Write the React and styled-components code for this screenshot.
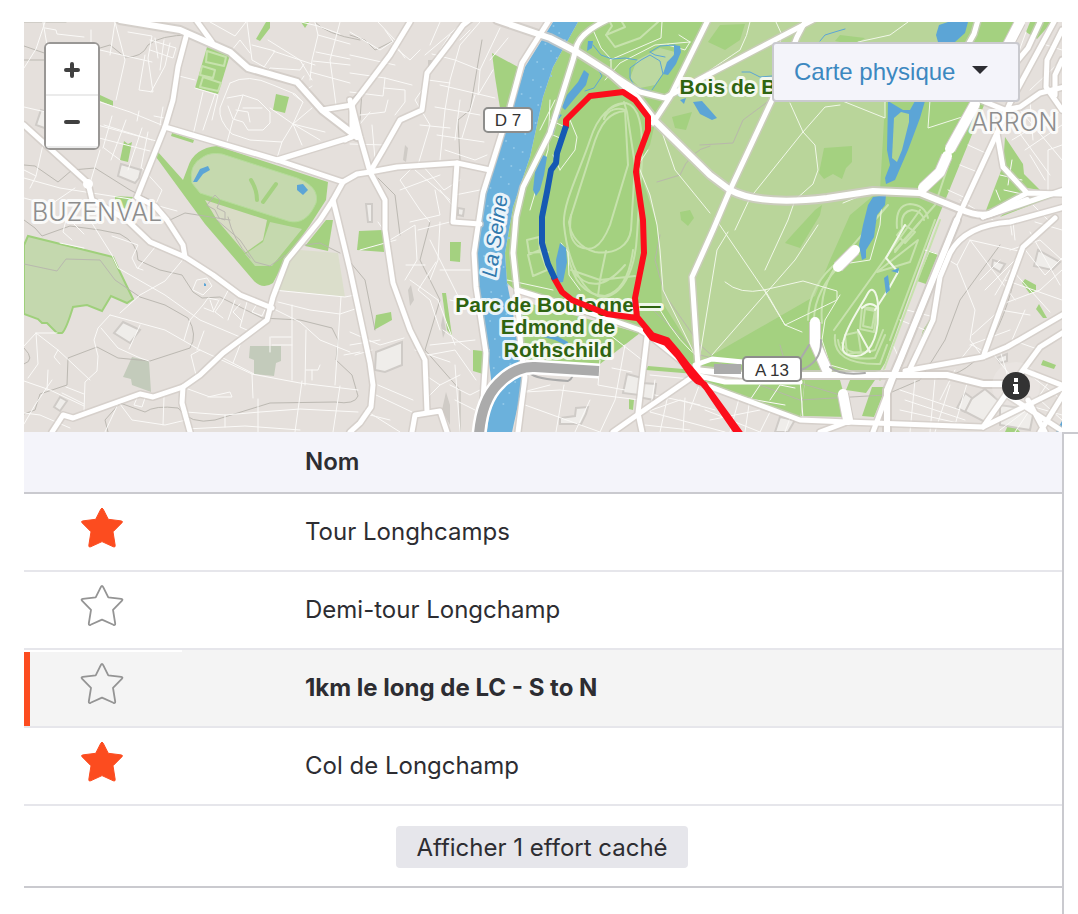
import React, { useState } from "react";
import styled, { createGlobalStyle } from "styled-components";

const GlobalStyle = createGlobalStyle`
    * {
        box-sizing: border-box;
    }

    body {
        margin: 0;
        background: #fff;
        color: #2d2d32;
        font-family: Inter, "Liberation Sans", sans-serif;
    }
`;

const Page = styled.div`
    display: grid;
    grid-template-columns: minmax(0, 1fr) 16px;
    grid-template-rows: 410px 1fr;
    grid-template-areas:
        "map ."
        "results aside";
    min-height: 100vh;
    padding: 22px 0 0 24px;
`;

const MapPanel = styled.section`
    grid-area: map;
    position: relative;
    overflow: hidden;
    background: #e5e0dc;
`;

const MapDrawing = styled.svg`
    display: block;
    width: 100%;
    height: 100%;
`;

const ZoomControl = styled.div`
    position: absolute;
    top: 20px;
    left: 20px;
    width: 56px;
    overflow: hidden;
    border: 2px solid #999795;
    border-radius: 6px;
    background: #fff;
`;

const ZoomButton = styled.button`
    display: flex;
    align-items: center;
    justify-content: center;
    width: 100%;
    height: 52px;
    padding: 2px 0 0;
    border: 0;
    border-bottom: 2px solid #ebebeb;
    background: #fff;
    cursor: pointer;
`;

const MapType = styled.div`
    position: absolute;
    top: 20px;
    right: 42px;
    display: flex;
    align-items: center;
`;

const MapSelect = styled.select`
    width: 248px;
    height: 60px;
    padding: 0 56px 2px 20px;
    appearance: none;
    border: 2px solid #cacacf;
    border-radius: 4px;
    background: #f4f4fa;
    color: #3c88c0;
    font-family: "Liberation Sans", Arial, sans-serif;
    font-size: 24px;
    cursor: pointer;
`;

const Caret = styled.svg`
    position: absolute;
    top: 24px;
    right: 32px;
    width: 16px;
    height: 8px;
    pointer-events: none;
`;

const InfoButton = styled.button`
    position: absolute;
    right: 32px;
    bottom: 32px;
    width: 28px;
    height: 28px;
    padding: 0;
    border: 0;
    border-radius: 50%;
    background: #333;
    box-shadow: 0 0 0 10px rgba(255, 255, 255, 0.15);
    cursor: pointer;
`;

const Results = styled.section`
    grid-area: results;
    min-width: 0;
`;

const Aside = styled.aside`
    grid-area: aside;
    border-top: 2px solid #cacacf;
    border-left: 2px solid #cacacf;
`;

const SegmentTable = styled.table`
    width: 100%;
    table-layout: fixed;
    border-collapse: separate;
    border-spacing: 0;
    font-size: 24px;
    line-height: 32px;
`;

const HeadCell = styled.th`
    width: ${(props) => (props.$star ? "158px" : "auto")};
    height: 62px;
    padding: 0 20px 0 ${(props) => (props.$star ? "20px" : "123px")};
    border-bottom: 2px solid #cacacf;
    background: #f4f4fa;
    font-weight: 600;
    text-align: left;
`;

const StarCell = styled.td`
    height: 78px;
    padding: 0 2px 0 0;
    border-bottom: 2px solid #e6e6eb;
    background: ${(props) => (props.$active ? "#f4f4f4" : "#fff")};
    box-shadow: ${(props) => (props.$active ? "inset 0 2px #fff, inset 6px 0 #fc4c1f" : "none")};
    text-align: center;
`;

const NameCell = styled.td`
    height: 78px;
    padding: 0 20px 0 123px;
    border-bottom: 2px solid #e6e6eb;
    background: ${(props) => (props.$active ? "#f4f4f4" : "#fff")};
    font-weight: ${(props) => (props.$active ? 700 : 400)};
`;

const StarButton = styled.button`
    display: block;
    width: 44px;
    height: 44px;
    margin: 0 auto 8px;
    padding: 0;
    border: 0;
    background: none;
    cursor: pointer;
`;

const FooterCell = styled.td`
    height: 82px;
    padding: 2px 2px 0 0;
    border-bottom: 2px solid #cacacf;
    text-align: center;
`;

const HiddenButton = styled.button`
    height: 42px;
    padding: 0 20px;
    border: 0;
    border-radius: 4px;
    background: #e6e6eb;
    color: #2d2d32;
    font-family: inherit;
    font-size: 24px;
    cursor: pointer;
`;

const Parks = styled.g`
    fill: #a4d180;
`;

const Water = styled.g`
    fill: #5ca5d6;
`;

const Lines = styled.g`
    fill: none;
    stroke: ${(props) => props.$color};
    stroke-width: ${(props) => props.$width}px;
    stroke-linejoin: round;
    stroke-linecap: ${(props) => props.$cap || "round"};
    opacity: ${(props) => props.$opacity || 1};
`;

const Label = styled.text`
    paint-order: stroke;
    stroke: #fff;
    stroke-opacity: 0.85;
    stroke-width: 6px;
    stroke-linejoin: round;
`;

const PlaceLabel = styled(Label)`
    fill: #8d8d8d;
    font: 300 25px Inter, sans-serif;
`;

const ParkLabel = styled(Label)`
    fill: #2f6411;
    font: bold 21px "Liberation Sans", Arial, sans-serif;
    text-anchor: middle;
`;

const RiverLabel = styled(Label)`
    fill: #3179ae;
    font: italic 21px "Liberation Sans", Arial, sans-serif;
`;

const ShieldLabel = styled.text`
    fill: #333;
    font: 17px "Liberation Sans", Arial, sans-serif;
    text-anchor: middle;
`;

const parks = [
    "M158 152L183 180L188 167Q194 148 217 146L328 182L326 200L310 225L284 262L273 283Q263 290 254 281L205 224L156 157Z",
    "M333 220L328 251L305 246L326 220Z",
    "M207 47L230 55L218 94L195 88Z",
    "M276 94L289 97L285 113L273 110Z",
    "M266 22H270V28L260 41L256 39Z",
    "M301 22H309L305 28Z",
    "M100 95L113 101V106L100 101Z",
    "M124 141L128 144L132 142L128 162L120 160Z",
    "M115 196L133 197L126 209L115 205Z",
    "M172 133L194 140L193 143L171 136Z",
    "M359 231L383 230L384 252L357 250Z",
    "M450 242H461L460 262L450 261Z",
    "M473 350L483 351V374L473 371Z",
    "M376 315L391 312L392 320L374 330Z",
    "M442 293H446L452 336L447 330Z",
    "M629 399L634 400L633 410L629 409Z",
    "M492 53L518 67L508 108H500L495 77Z",
    "M578 22H1018L933 230L885 363L878 374H700L645 335L517 292L507 283L505 253L513 207L530 157L543 97L553 67Z",
    "M517 300L640 333L600 364L524 362Z",
    "M1030 22H1052L1037 39L1026 32Z",
    "M1005 137L1023 164L1024 174L1040 190L1027 188L1003 166Z",
    "M1002 168L1025 192L985 213Z",
    "M1000 217L1052 197L1020 198Z",
    "M700 380L805 379L800 420Z",
    "M805 380H840L850 417L801 416Z",
    "M850 380H875L866 393L846 390Z",
    "M872 387H886L874 417L862 416Z",
    "M930 251L938 254L926 284L917 281Z",
    "M923 330L931 318L926 334L921 338Z",
    "M1025 279L1036 285V291L1030 294L1022 283Z",
    "M1039 304L1047 318L1043 318L1036 309Z",
    "M1043 360L1056 365L1054 369L1041 365Z",
    "M1010 421L1020 432H1005Z",
    "M648 366L695 370V374L646 370Z",
];

const minorRoads = [
    // north west
    "M43 22L47 45L52 78L58 140", "M24 68L36 49L45 22", "M45 28L56 30L57 34L84 37", "M91 42V30M110 55L115 22L125 60L116 100",
    "M100 50L152 62", "M128 32L152 36L148 58L153 92L139 90L145 55", "M150 40L176 48L173 58L150 50", "M155 38L158 58M164 40L160 70M170 43L165 66L151 92",
    "M24 107L50 113L90 123L160 142", "M100 102L130 112L164 126", "M139 111L137 121M163 107L160 125M154 116L164 118", "M112 116L103 148M126 120L111 160M142 128L128 170M148 132L141 168",
    "M104 125L152 140M99 138L150 151M104 148L120 160", "M50 113L36 176M24 170L36 176L30 188M100 150L88 190", "M24 178L60 188L137 200L177 211", "M24 198L50 205L75 188",
    "M142 168L162 190L155 206", "M179 76L195 80M203 92L193 135M215 94L203 130M195 88L218 95L212 120",
    "M230 83Q248 73 273 85L295 94L303 102L293 124L282 142L250 140L232 134Q218 120 220 108L230 83",
    "M227 98L243 95L258 100L270 112V123L263 130H248L243 122L233 119L228 106", "M243 95L238 110L234 119M236 110L248 112L250 122M243 108H262", "M303 102L293 94M293 124L320 140M293 124L312 108M293 124L325 132M293 124L270 108M293 124L302 145M282 142L277 158M227 142L233 120",
    "M232 50L240 40L250 53M210 22L235 36L246 22M247 22L252 60L273 72M268 40L300 60L312 80M252 45L275 51L262 70M273 51L315 65", "M315 22L318 35L312 60L310 80M318 35L350 44M316 52L350 59M313 61L350 65M310 72L350 83",
    "M265 76L270 68L300 70L304 64M300 82L304 76M306 90L312 86M336 105L330 60L340 22", "M301 22L318 26L340 34",
    // south west
    "M66 220L63 232L72 240M72 222L84 234M60 243L84 248M90 220L112 255L118 268L165 295L200 320L240 337", "M112 236L138 245L132 258L137 268L143 270M156 246L138 268", "M185 257L165 281L140 295L120 313", "M57 333L36 333L24 346",
    "M24 381L50 390L84 406M36 333L58 350L90 380", "M36 333L38 364L28 378M58 350L54 357L60 364M48 370L47 390", "M110 315L98 328L94 340L98 356L97 371L85 382L84 411M110 315L165 330L200 350L252 374L300 383L358 390",
    "M101 328L118 348L140 358L149 361M129 349L140 325", "M197 280L207 278L212 286L203 295L193 290Z", "M200 350L191 355L196 375M204 331L197 350M184 340L190 320L203 305L208 298L218 300",
    "M230 287L222 302L215 312L223 318M219 300L214 310M235 300L228 320M210 300L214 312L204 308M247 302L240 327L247 330M240 304L233 312L242 321M258 302L252 312L262 316L267 305", "M270 337V352M271 337H291M292 305V380M272 345H292M306 330L305 385M320 365L318 370H306M312 370V380",
    "M240 345L233 363M223 358L254 374M252 374L253 398M258 399V432M302 381L295 432M340 386L333 432M188 389L210 397H232L230 392L208 397M186 412L225 415L260 412L300 409L358 412M225 415V427M186 429L245 426L300 430", "M120 404L132 420L165 425L186 420M164 397L163 425M118 404L105 432M137 398L134 405L142 407L145 398",
    "M66 387L84 394M62 393L84 404M24 413L40 415L70 428M24 424L35 405L52 380", "M273 290L345 297L355 295M278 302L310 310L340 314L358 308M341 297L335 385M272 308L300 322L320 340L350 352", "M344 355L360 352",
    // centre
    "M350 32L380 50L395 40L404 30M350 55L395 65M385 30L405 58M378 22L395 40", "M350 73L385 78L412 85M385 78L383 96L350 92M384 88L405 90V102L395 115", "M360 115L385 112L388 100M372 125L376 170M350 144L385 145M360 124L370 112",
    "M480 22L460 45L450 80L445 110L440 160", "M470 30L460 40M500 28L480 70L478 95L493 70M508 38L490 60", "M432 54L455 60L480 70M428 80L450 83M422 90L415 100L430 125L418 165M440 85L495 98",
    "M420 125L450 128M435 107L480 115M437 135L484 142M445 150L475 160L487 155", "M475 95L462 138M460 100L455 140", "M412 168L400 180L420 210L430 222M415 170L450 200M422 165L444 190L460 180M400 190L440 175", "M435 190L440 215L410 222M455 220V195L480 190",
    "M392 45L410 60L420 50M440 22L430 45M450 35L440 50M458 27L425 55M440 190L452 205",
    "M385 232L378 222M390 240L415 225L417 260L405 280M406 265H425M418 230L450 222M430 240L460 300M440 222L438 260L430 280", "M410 280L438 300M436 262L418 290L430 300L440 330",
    "M440 270L470 270M438 300L455 345M450 300L472 305M443 330L470 350M430 345L475 340", "M428 355L455 350L476 380M415 350L450 362M425 375L440 385L460 375M440 385L425 400M450 385L470 395L480 390M455 400L475 410",
    "M455 365L460 432M378 385L413 400M376 395L412 412M365 410L400 432M396 240L360 250", "M350 332L380 345L404 338M355 355L372 350M350 345L380 340M390 420L370 415",
    // boulogne
    "M530 370L525 392L560 390L640 400M564 385L556 432M523 392L550 385", "M600 360L598 385L625 390M612 368L632 372M625 345L615 400L600 432M648 345L642 360L610 335M650 375L700 380",
    "M655 380L650 412L725 432M668 395L660 432M685 398L683 432M643 413L680 400L715 410M700 383L690 410M655 395L700 405M645 425L690 430",
    "M525 405L600 432M590 400L575 432M740 395L730 432M750 398L745 432M705 410L760 432M770 412L760 432M790 418L785 432M710 420L760 410",
    "M727 395L785 405M750 400L760 385M770 400L780 385L795 388M800 380L803 418",
    // east side
    "M1040 43L1062 50M1026 32L1005 90M1062 60L1030 90M1020 110L1062 160M1010 120L1050 175M1025 150L1062 125M1012 140L1062 110M1033 140L1030 100M1045 180L1030 155M1048 190V150L1062 145",
    "M968 145L990 155M960 165L980 173M948 190L970 200M1000 175L1022 180M1004 190L1022 194M996 190L1000 200M1012 160L1008 185", "M940 400L955 370M925 250L940 255L957 265L970 240L1023 252M957 265L975 310L970 340L985 360",
    "M970 240L1015 300M980 280L1000 260M995 295L1010 270M985 290L1020 255M1000 305L1040 290L1062 270M1012 270L1050 312M1025 310L1012 340L1040 350M1010 250L1040 240L1062 260M1035 222L1062 230",
    "M1005 280L1062 300M972 335L1000 310L1030 315M970 345L1010 330M1023 247L1045 275L1062 258M1013 222L1015 240M1030 232L1060 285", "M900 320L925 330L915 350M893 345L900 360M907 310L930 316",
    "M900 390L960 410M915 380L910 432M935 378L930 432M950 385L935 432M905 400L965 420M968 380L955 425M900 410L980 428M990 350L1010 375M960 360L972 345L990 355M1000 350L1010 384",
    "M1030 375L1062 400M1010 400L1062 415M1000 430L1040 400L1062 420M1050 380L1015 432", "M993 220L960 200M1010 220L1012 235M1033 205L1050 222",
];

const parkPaths = [
    "M594 32L601 48L611 59V71M662 22L661 38L610 60M605 80L620 63L655 45L690 42M690 42L679 35M700 77Q725 60 740 50Q748 35 750 22M776 57L782 35L776 22",
    "M858 42L890 35L908 22M790 103L803 132L815 145L818 170L813 184L795 200L788 220L765 270M803 132L825 107L840 105M803 132L750 198L735 230M840 100L885 118V100",
    "M715 218L764 290L785 325M764 290Q740 295 725 282M764 290L803 281L837 291V300L785 325L765 290M728 232L717 250L700 355M818 225L795 260L712 355",
    "M930 100L928 128L962 117M843 203L870 192M560 170L575 150L577 137L570 120M663 135L675 170L710 213M648 150L638 165L650 195L657 225L660 250L663 290L695 355M530 210L548 150L550 100",
    "M507 280L530 285L553 290M553 155L560 170M550 120L565 127M548 133L560 138M561 243L568 252L569 275L580 290M800 55L803 77M668 45L685 50L690 42M700 358Q680 345 660 310",
    "M882 200L880 225L870 260L850 263L845 255M840 295L825 320L822 340L830 365L865 375L885 370M785 325L802 332M555 100L540 130",
];

const raceTracks = [
    "M604 119C606 108 616 103 626 103C639 106 643 125 642 160L637 235C635 275 620 296 603 297C585 296 568 265 564 225C562 205 580 170 590 140C598 115 610 105 626 103",
    "M604 119C608 109 618 107 625 110L628 165L610 225C600 250 590 252 578 246C570 240 569 230 571 215",
    "M624 102L627 112L635 165L631 230C629 245 616 255 595 252C580 248 570 235 569 222L592 150C600 122 610 112 625 111",
    "M567 248Q573 295 605 296Q628 290 633 250M572 270Q595 300 625 265M571 270L600 280L606 251M598 296L600 280L635 276",
    "M527 240L539 237L540 252L529 253ZM528 255L540 250L547 270L533 276ZM540 252L548 252",
    "M606 35L625 27L622 22M606 35L615 47L640 38L658 22M606 35L612 26L610 22",
    "M940 220L880 380M935 220L890 340M895 252L920 222M910 262L877 272L918 240Z",
    "M835 335Q832 365 880 364L887 345M838 340Q840 362 875 358L885 335M842 343Q848 358 875 350L883 330M834 330L920 210",
    "M845 335L858 332L861 352L847 354ZM862 307L877 309L874 332L860 329ZM865 309L875 311L872 328L863 326ZM905 225L915 232L905 243L897 235Z",
    "M897 228Q895 205 910 204Q925 205 928 218M902 228Q900 212 912 210Q922 211 924 220M895 250L935 205L950 160M822 323Q818 280 850 250",
    "M808 320Q808 285 840 260L888 205M814 320Q814 290 845 260",
];

const outlinedTracks = [
    "M843 350C840 335 862 305 868 293C873 284 879 294 878 315C878 340 868 357 855 356Q845 356 843 350Z",
    "M858 330L870 352M862 308Q870 300 878 308M886 258L898 272L888 290L875 310M886 258L905 225",
];

const contours = [
    "M24 46L50 55M24 60L60 60L110 45L125 57Q142 58 148 45Q160 35 190 35M24 22H66M315 22Q325 34 360 40",
    "M24 165L35 166L58 182L72 170L95 168L130 190L150 200L170 220L185 213L230 220", "M24 220L35 228L42 236L70 226L100 230L120 234Q138 243 138 260L160 270L182 275L193 292L202 298L220 297L262 318L300 320L332 328L338 340L336 360L352 375L358 396Q355 405 335 402L270 403L215 420Q190 425 178 408Q155 405 145 412L120 403L105 420L108 432",
    "M24 264L57 271L66 259L100 260L115 280L140 297L165 305L188 318Q198 335 190 348L150 361L118 358L97 347L68 358L67 385L40 394L35 410L24 414M24 348Q36 360 24 364",
    "M350 35L365 40L375 50L395 40M482 40L470 110L458 120L460 160M350 100L362 90L360 120M378 178L395 195L400 235M350 262L365 280L375 330M430 222L420 260L440 300L425 350L460 390L460 432",
    "M700 145L733 143L743 120L770 100L790 70M660 235L655 260L665 295L700 345M710 146Q690 150 680 175L657 182M648 305L700 355L720 360",
    "M1000 245L960 300L945 340L920 380L885 395L800 400L760 385M700 345L740 380M938 378Q1000 372 1020 250M780 345L790 380L840 395",
    "M305 245L320 243L340 253M207 205L215 195L220 200L217 208L225 212V220L219 218L215 210ZM217 220L240 240L255 262L270 266L285 255M228 217Q233 240 250 258",
];

const buildings = [
    "M41 110L60 115L50 130L36 125Z", "M121 164L141 170L139 178L135 183L118 176Z", "M123 322L140 330L130 343L114 333Z", "M60 397L67 401L60 411L54 407Z", "M376 352L402 342V365L385 372L375 370Z", "M366 204L372 204V222H368Z", "M458 208L464 209L463 216L458 215Z",
    "M627 374L642 378L639 395L623 393ZM642 383L656 384L654 400L638 397Z", "M560 418L575 416L576 408L588 407L586 414L581 424L560 424Z", "M1038 250L1060 262L1052 270L1034 266Z", "M993 260L1005 264L1000 272L992 267Z", "M997 358L1007 354V361L1000 363Z", "M985 389L1000 402L985 422L960 409L970 400Z", "M965 393L972 398L965 412L957 408Z", "M780 417L795 420L788 432H775Z",
    "M1000 405L1034 410L1030 430L1000 425Z",
];

const roads = [
    "M187 33L178 67L173 100L165 127L137 197", "M165 127L277 160L343 182L357 174L370 172L397 167L457 163L490 170", "M24 125L88 183L92 200L127 220L150 242L185 257L213 275L240 295L272 308",
    "M137 197L155 206L167 220L183 245L185 257", "M343 182L333 200L320 220L287 260L273 297L267 320L223 353L200 375L183 387L153 397L140 394L73 418L63 415L52 432", "M183 387L182 403L190 432",
    "M333 200L338 220L350 270L370 363L373 385L371 407L360 423L350 432", "M370 172L385 200V230L393 283L410 330L425 360L427 412", "M412 432L415 415L440 411L447 432", "M370 172L383 150L400 120L422 110L427 73L450 43L463 25L472 18",
    "M322 110L352 105V137L277 160", "M352 105L362 92L390 55L410 22", "M352 105L360 137L370 172", "M350 100L357 133L345 140", "M457 163L453 222L480 224", "M548 22L522 63L510 107L483 193L474 253L476 287L486 353L483 400L482 432", "M196 20L212 42",
    "M607 20Q582 32 577 45L573 60L550 133L523 187L516 217L513 253L517 290L521 350L525 377L518 432", "M517 290L600 316L640 330L650 336L690 368", "M708 20L670 97L653 123", "M610 73L640 92L665 98L700 79L813 20", "M806 20L797 37L772 100L730 190L713 230L692 277L698 367",
    "M647 337L638 413L642 432", "M698 373L640 413L613 432", "M700 383L800 420L847 422L983 427L1062 388", "M978 97L995 68", "M1055 20L1010 103L997 133L960 213L957 220L900 360L873 432",
    "M1064 207L1010 222Q965 225 950 253L940 277L933 320L908 373", "M997 133L1003 167L1027 193L1064 194M1027 193L983 217", "M980 100L1005 110L1020 107L1040 93L1064 87", "M1062 30L1047 60L1046 87L1062 110M1040 22L1028 48L985 100M1062 60L1055 75V95",
    "M1055 218L1023 247L983 357M905 371L983 357L1007 347L1064 314M1064 332L1040 347L1023 370L1064 386M983 427L1023 370M1028 400L1045 432M1064 393L1040 432M1007 395L1064 432", "M820 432L847 422",
    "M978 20L974 34L965 50M983 217L1064 190",
];

const mainRoads = [
    "M120 20L180 30L230 52L248 68L297 82L322 110L357 137", "M497 20L550 38L577 52L610 73L637 97L657 123L710 175L730 190Q760 206 827 198L873 191L920 193L960 209Q978 217 990 214L1027 200",
    "M695 370L743 375L810 375H877L947 375L983 384L1015 384", "M957 220L900 360L887 390V432",
];

const wideRoads = [
    "M1020 22L1008 45", "M975 104L950 149", "M947 156L940 172L923 188", "M815 322V343L827 370", "M843 394L848 420", "M855 250L838 267",
];

const riverPath =
    "M553 22L525 67L513 107L497 160L483 200L477 253L478 280L488 353L492 387L487 432H512L522 387L520 360L513 313L507 283L505 253L513 207L530 157L543 97L553 67L578 22Z";

const ponds = [
    "M584 70L589 74L586 85L575 98L565 110L562 107L567 95L578 82Z", "M543 155L547 157L544 175L540 190L536 196L533 190L535 172Z", "M588 41L593 41L592 48L587 51Z", "M560 243L566 248L567 262L563 282L557 283L556 260Z", "M543 337L555 335L568 342L567 346L555 340Z",
    "M674 45L680 46L681 52L676 64L668 75L663 74L667 62L674 55Z", "M693 102L702 101L710 110L717 118L712 120L700 114Z", "M680 100L686 98L684 104Z", "M559 114L562 115L558 120L556 118ZM553 128L555 128L553 136Z",
    "M939 25L948 22H968L965 33L955 42H938L936 35Z", "M888 101L903 110H910L915 101H925L920 118L908 150L895 180L886 184L885 178L890 165L887 150Z", "M868 205L873 197L886 195L885 205L877 215L874 237L866 250V258L862 260L859 245L863 225Z", "M884 278L888 275L890 290L886 294ZM891 271L899 268L898 273Z",
    "M193 182L200 169L208 166L210 170L203 174L197 182Z", "M297 185L303 184L308 190L303 195L297 190Z", "M204 283L206 284L206 286H204Z", "M1062 421V432H1056Z",
];

const dots = Array.from({ length: 64 }, (_, i) => ({ y: 26 + i * 6 + (i % 3), t: (i * 37) % 27 }));

// left edge of the river at a given height
const bank = (y) => {
    if (y < 67) return 553 - (y - 22) * 0.62;
    if (y < 200) return 525 - (y - 67) * 0.31;
    if (y < 280) return 482 - (y - 200) * 0.05;
    return 479 + (y - 280) * 0.1;
};

const MapBackground = () => (
    <MapDrawing viewBox="24 22 1038 410" preserveAspectRatio="xMidYMid slice" role="img" aria-label="Carte du parcours">
        <rect x="-500" y="0" width="2200" height="460" fill="#e5e0dc" />
        <path d="M288 258L300 250L338 253L345 297L278 290Z" fill="#dbdecb" />
        <path d="M132 357L149 361L151 392L132 385L131 379L123 377ZM250 346H281V361L276 363L274 376L254 374V360L249 358Z" fill="#c3cbbb" />
        <path d="M24 245L28 236L113 257L118 268L133 299L127 303L111 296L102 311L87 305L73 307Q66 330 62 333H57L47 323H42L38 319L24 314Z" fill="#c4d8ae" stroke="#9fd07b" strokeWidth="2" />
        <Parks>
            {parks.map((d) => (
                <path key={d} d={d} />
            ))}
        </Parks>
        <path d="M192 183Q188 165 203 157Q210 152 222 154L297 178Q320 187 316 203Q306 226 288 221L200 193Z" fill="#c5d9ae" stroke="#b5dc9a" strokeWidth="1" />
        <path d="M205 200L267 220L263 240L245 253L217 220Z" fill="#d9dcc6" />
        <path d="M270 222L302 229L272 266H255L245 254L263 242Z" fill="#c5d9ae" />
        <path d="M655 123L672 90L708 22H960L930 62L885 103L880 190L850 215L830 260L815 296L700 362L662 302L657 225L638 165L650 145Z" fill="#b9d59a" />
        <path d="M637 60L660 48L675 52L665 70L655 85L640 88L630 78Z" fill="#bcd8a0" />
        <g fill="#a4d180">
            <path d="M824 148L852 146V162L846 168L842 179L833 174L824 179L819 173Z" />
            <path d="M720 25L745 24L740 40L725 50L708 42Z" />
            <path d="M680 212L690 210L694 218L688 226L681 220Z" />
            <path d="M792 235L815 210L822 205L820 215L800 248L785 243Z" />
            <path d="M840 35L865 38L855 45L835 41Z" />
            <path d="M672 117L692 112L686 130L675 128Z" />
        </g>
        <Lines $color="#b8b5ae" $width={1} $opacity={0.9}>
            {contours.map((d) => (
                <path key={d} d={d} />
            ))}
        </Lines>
        <g fill="#efedea" stroke="#cfcbc7" strokeWidth="2">
            {buildings.map((d) => (
                <path key={d} d={d} />
            ))}
        </g>
        <g fill="#cfcbc6">
            <path d="M411 285L414 300L410 306L408 290ZM428 60L433 60L428 72ZM405 145L408 148L406 162L403 160ZM443 315L446 330L443 338L441 325ZM446 392L450 405L450 425L442 410Z" />
        </g>
        <Lines $color="#fbfaf8" $width={1}>
            {minorRoads.map((d) => (
                <path key={d} d={d} />
            ))}
        </Lines>
        <Lines $color="#c7e2ad" $width={2}>
            {raceTracks.map((d) => (
                <path key={d} d={d} />
            ))}
            <path d="M207 51L226 57L224 66L206 62ZM202 66L215 70L213 78L200 75ZM203 77L221 83L218 91L200 87Z" />
        </Lines>
        <Lines $color="#a4d180" $width={4}>
            <path d="M251 180Q257 190 257 200M276 184L263 202" />
        </Lines>
        <Lines $color="#f1f8e8" $width={1}>
            {parkPaths.map((d) => (
                <path key={d} d={d} />
            ))}
        </Lines>
        <Lines $color="#f1f8e8" $width={2}>
            {outlinedTracks.map((d) => (
                <path key={d} d={d} />
            ))}
        </Lines>
        <Water>
            <path d={riverPath} fill="#6bb1dc" />
            {ponds.map((d) => (
                <path key={d} d={d} />
            ))}
        </Water>
        <path d="M894 118L901 112L909 114L909 122L902 150L897 162L892 158Z" fill="#b1d58f" />
        <Lines $color="#5ca5d6" $width={1}>
            <path d="M593 45L601 55L612 59L625 58L637 60M596 66L602 76L594 88L585 91M650 91L635 87L630 78V68L641 60L650 55L660 61L663 74L652 90M650 52L660 46L675 45M650 52L655 55L665 57M820 41L825 35L838 31L845 29M742 72L750 72L760 77L772 76" />
        </Lines>
        <g fill="#91c8e8">
            {dots.map(({ y, t }) => (
                <circle key={y} cx={bank(y) + 3 + t} cy={y} r="1" />
            ))}
        </g>
        <Lines $color="#d0cac5" $width={8} $opacity={0.7}>
            {roads.map((d) => (
                <path key={d} d={d} />
            ))}
        </Lines>
        <Lines $color="#d0cac5" $width={10} $opacity={0.8}>
            {mainRoads.map((d) => (
                <path key={d} d={d} />
            ))}
        </Lines>
        <Lines $color="#d0cac5" $width={12} $cap="butt">
            {wideRoads.map((d) => (
                <path key={d} d={d} />
            ))}
        </Lines>
        <Lines $color="#fff" $width={5}>
            {roads.map((d) => (
                <path key={d} d={d} />
            ))}
            <path d="M695 365L712 359L743 362M695 375L725 382H800" />
        </Lines>
        <Lines $color="#fff" $width={6}>
            {mainRoads.map((d) => (
                <path key={d} d={d} />
            ))}
            <circle cx="88" cy="184" r="2" />
        </Lines>
        <Lines $color="#fff" $width={10}>
            {wideRoads.map((d) => (
                <path key={d} d={d} />
            ))}
        </Lines>
        <Lines $color="#aaa" $width={2}>
            <path d="M530 373Q535 379 568 381Q575 377 571 372M801 370Q822 362 821 340M801 358L809 345M830 367Q840 376 865 373" />
        </Lines>
        <Lines $color="#fff" $width={15} $cap="butt">
            <path d="M479 434Q482 400 498 384Q515 366 535 367L599 371" />
        </Lines>
        <Lines $color="#ababab" $width={10} $cap="butt">
            <path d="M479 434Q482 400 498 384Q515 366 535 367L599 371M714 369H741" />
        </Lines>

        <RiverLabel transform="translate(496 278) rotate(-82)">La Seine</RiverLabel>
        <PlaceLabel x="32" y="221">BUZENVAL</PlaceLabel>
        <PlaceLabel x="971" y="131">ARRON</PlaceLabel>
        <ParkLabel x="558" y="312">Parc de Boulogne —</ParkLabel>
        <ParkLabel x="558" y="334">Edmond de</ParkLabel>
        <ParkLabel x="558" y="357">Rothschild</ParkLabel>
        <ParkLabel x="728" y="94">Bois de B</ParkLabel>

        <Lines $color="#fc0d1b" $width={6}>
            <path d="M566 126V120L590 96L623 92L635 100L648 117V130L638 157L636 172L643 220L644 253L635 298L637 317L652 335L667 340L678 353L688 366L710 392L742 436M554 278L562 292L572 300L607 314L637 318M646 330L652 338L666 343L678 356L692 376L697 381L704 384L714 399L738 434" />
        </Lines>
        <Lines $color="#1659b3" $width={6} $cap="butt">
            <path d="M566 126L557 153L556 163L551 170L547 192L542 217V243L548 264L555 279" />
        </Lines>

        <g fill="#fff" stroke="#8d8d8b" strokeWidth="2">
            <rect x="484" y="108" width="48" height="24" rx="4" />
            <rect x="743" y="357" width="58" height="24" rx="4" />
        </g>
        <ShieldLabel x="508" y="126">D 7</ShieldLabel>
        <ShieldLabel x="772" y="376">A 13</ShieldLabel>
    </MapDrawing>
);

const Star = ({ filled }) => (
    <svg width="44" height="44" viewBox="0 0 44 44" aria-hidden="true">
        <path
            d="M20.8 3.2Q22 .8 23.2 3.2L28.3 13.3L41.2 14.9Q43.4 15.3 41.8 16.9L33 25.8L35.2 39.5Q35.4 41.6 33.4 40.8L22 35.6L10.6 40.8Q8.6 41.6 8.8 39.5L11 25.8L2.2 16.9Q.6 15.3 2.8 14.9L15.7 13.3Z"
            fill={filled ? "#fc4c1f" : "none"}
            stroke={filled ? "#fc4c1f" : "#949494"}
            strokeWidth={filled ? 1 : 1.8}
            strokeLinejoin="round"
        />
    </svg>
);

const segments = [
    { name: "Tour Longhcamps", starred: true },
    { name: "Demi-tour Longchamp", starred: false },
    { name: "1km le long de LC - S to N", starred: false, active: true },
    { name: "Col de Longchamp", starred: true },
];

const App = () => {
    const [starred, setStarred] = useState(segments.map((segment) => segment.starred));

    const handleStarClick = (index) => {
        setStarred(starred.map((value, i) => (i === index ? !value : value)));
    };

    return (
        <Page>
            <GlobalStyle />
            <MapPanel>
                <MapBackground />
                <ZoomControl>
                    <ZoomButton type="button" aria-label="Zoom avant">
                        <svg width="16" height="16" viewBox="0 0 16 16">
                            <path d="M2 8H14M8 2V14" stroke="#404040" strokeWidth="4" strokeLinecap="round" />
                        </svg>
                    </ZoomButton>
                    <ZoomButton type="button" aria-label="Zoom arrière">
                        <svg width="16" height="16" viewBox="0 0 16 16">
                            <path d="M2 8H14" stroke="#404040" strokeWidth="4" strokeLinecap="round" />
                        </svg>
                    </ZoomButton>
                </ZoomControl>
                <MapType>
                    <MapSelect aria-label="Type de carte">
                        <option>Carte physique</option>
                    </MapSelect>
                    <Caret viewBox="0 0 16 8">
                        <path d="M0 0H16L8 8Z" fill="#2d2d32" />
                    </Caret>
                </MapType>
                <InfoButton type="button" aria-label="Informations">
                    <svg width="28" height="28" viewBox="0 0 28 28">
                        <path d="M12 6H16V10H12ZM11 12H16V20H17V22H11V20H12V14H11Z" fill="#fff" />
                    </svg>
                </InfoButton>
            </MapPanel>
            <Results>
                <SegmentTable>
                    <thead>
                        <tr>
                            <HeadCell $star aria-label="Favori" />
                            <HeadCell>Nom</HeadCell>
                        </tr>
                    </thead>
                    <tbody>
                        {segments.map((segment, index) => (
                            <tr key={segment.name}>
                                <StarCell $active={segment.active}>
                                    <StarButton
                                        type="button"
                                        aria-label={`Favori : ${segment.name}`}
                                        aria-pressed={starred[index]}
                                        onClick={() => handleStarClick(index)}
                                    >
                                        <Star filled={starred[index]} />
                                    </StarButton>
                                </StarCell>
                                <NameCell $active={segment.active}>{segment.name}</NameCell>
                            </tr>
                        ))}
                        <tr>
                            <FooterCell colSpan={2}>
                                <HiddenButton type="button">Afficher 1 effort caché</HiddenButton>
                            </FooterCell>
                        </tr>
                    </tbody>
                </SegmentTable>
            </Results>
            <Aside />
        </Page>
    );
};

export default App;
